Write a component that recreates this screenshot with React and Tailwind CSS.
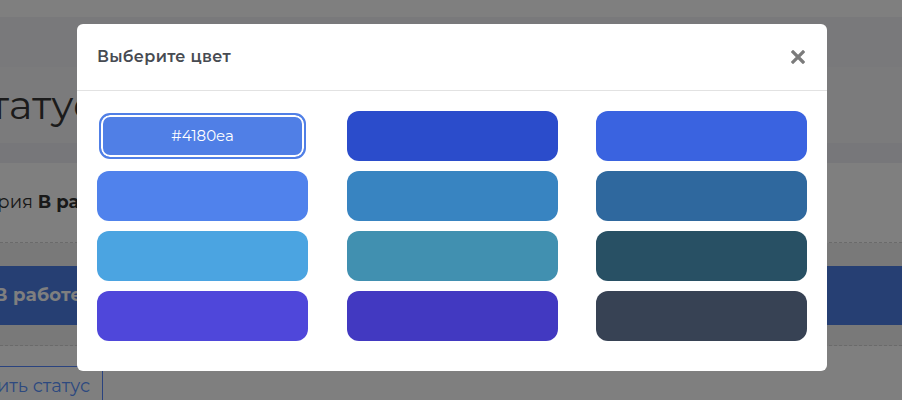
import React from "react";

const swatches = [
  ["#4180ea", "#2b4ccb", "#3a63e0"],
  ["#5082ec", "#3884c1", "#2f689e"],
  ["#4ba4e1", "#4190b0", "#285064"],
  ["#4f47da", "#4239c1", "#374254"],
];

const Swatch = ({ color, selected }) => {
  if (selected) {
    return (
      <div className="w-[211px] h-[50px] p-[2px]">
        <div className="w-full h-full rounded-[11px] border-2 border-[#507fe6] bg-[#507fe6] shadow-[inset_0_0_0_2px_#ffffff] flex items-center justify-center text-white text-[15px]">
          {color}
        </div>
      </div>
    );
  }
  return <div className="w-[211px] h-[50px] rounded-[12px]" style={{ backgroundColor: color }} />;
};

const App = () => {
  return (
    <div className="relative w-[902px] h-[400px] overflow-hidden bg-white font-['Montserrat','Open_Sans',sans-serif]">
      {/* page behind the dialog */}
      <div className="h-[17px] bg-white" />
      <div className="h-[50px] bg-[#f2f2f6]" />
      <div className="h-[76px] bg-[#f6f6f8] flex items-center">
        <h1 className="ml-[-38px] text-[40px] text-[#363636] leading-none">Статус</h1>
      </div>
      <div className="h-[20px] bg-[#eeeef4]" />
      <div className="h-[80px] bg-white flex items-center border-b border-dashed border-[#d4d4d4]">
        <p className="ml-[-47px] text-[18px] text-[#333]">
          История <b>В работе</b>
        </p>
      </div>
      <div className="h-[23px] bg-[#f3f3f3]" />
      <div className="h-[59px] bg-[#4c7ee6] flex items-center">
        <span className="ml-[-6px] text-[18px] font-bold text-white tracking-[0.3px]">В работе</span>
      </div>
      <div className="h-[21px] bg-[#f3f3f3] border-b border-dashed border-[#d4d4d4]" />
      <div className="h-[20px] bg-white" />
      <div className="flex">
        <button className="ml-[-81px] h-[40px] pl-4 pr-3 border-t border-r border-[#5486ff] text-[18px] text-[#5a93fe]">
          Изменить статус
        </button>
      </div>

      {/* overlay */}
      <div className="absolute inset-0 bg-black/50" />

      {/* dialog */}
      <div className="absolute left-[77px] top-[24px] w-[750px] rounded-[6px] bg-white">
        <div className="h-[67px] flex items-center justify-between pl-[20px] pr-[22px] border-b border-[#e2e2e2]">
          <h2 className="text-[16px] font-semibold text-[#474b52] tracking-[0.3px]">Выберите цвет</h2>
          <svg width="14" height="14" viewBox="0 0 14 14">
            <path d="M2 2 L12 12 M12 2 L2 12" stroke="#7b7b7b" strokeWidth="3.2" strokeLinecap="square" />
          </svg>
        </div>
        <div className="pt-[20px] pb-[30px] px-[20px] grid grid-cols-[211px_211px_211px] justify-between gap-y-[10px]">
          {swatches.flat().map((c, k) => (
            <Swatch key={c} color={c} selected={k === 0} />
          ))}
        </div>
      </div>
    </div>
  );
};

export default App;
